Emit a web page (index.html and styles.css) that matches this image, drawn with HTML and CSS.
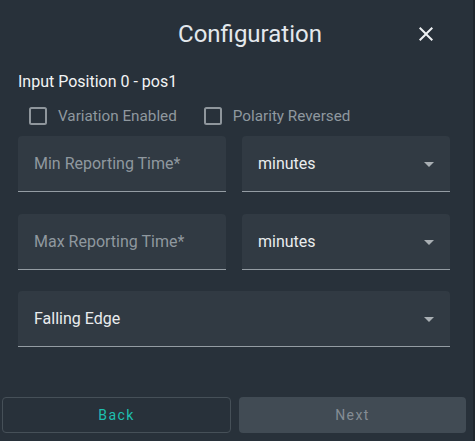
FILE: index.html
```html
<!DOCTYPE html>
<html lang="en">
<head>
    <meta charset="UTF-8">
    <meta name="viewport" content="width=device-width, initial-scale=1.0">
    <title>Configuration</title>
    <link rel="stylesheet" href="styles.css">
</head>
<body>

<div class="dialog">
    <div class="header">
        <div class="title">Configuration</div>
        <button class="close" aria-label="Close">
            <svg viewBox="0 0 24 24" width="24" height="24"><path d="M19,6.41L17.59,5L12,10.59L6.41,5L5,6.41L10.59,12L5,17.59L6.41,19L12,13.41L17.59,19L19,17.59L13.41,12L19,6.41Z"/></svg>
        </button>
    </div>

    <div class="content">
        <div class="subtitle">Input Position 0 - pos1</div>

        <div class="checks">
            <label class="check">
                <svg viewBox="0 0 24 24" width="24" height="24"><rect x="4" y="4" width="16" height="16" rx="1.5"/></svg>
                <span>Variation Enabled</span>
            </label>
            <label class="check">
                <svg viewBox="0 0 24 24" width="24" height="24"><rect x="4" y="4" width="16" height="16" rx="1.5"/></svg>
                <span>Polarity Reversed</span>
            </label>
        </div>

        <div class="row">
            <div class="field"><span class="placeholder">Min Reporting Time*</span></div>
            <div class="field select">
                <span class="value">minutes</span>
                <svg class="arrow" viewBox="0 0 24 24" width="24" height="24"><path d="M7,10L12,15L17,10H7Z"/></svg>
            </div>
        </div>

        <div class="row">
            <div class="field"><span class="placeholder">Max Reporting Time*</span></div>
            <div class="field select">
                <span class="value">minutes</span>
                <svg class="arrow" viewBox="0 0 24 24" width="24" height="24"><path d="M7,10L12,15L17,10H7Z"/></svg>
            </div>
        </div>

        <div class="row single">
            <div class="field select">
                <span class="value">Falling Edge</span>
                <svg class="arrow" viewBox="0 0 24 24" width="24" height="24"><path d="M7,10L12,15L17,10H7Z"/></svg>
            </div>
        </div>
    </div>

    <div class="actions">
        <button class="btn back">Back</button>
        <button class="btn next">Next</button>
    </div>
</div>

</body>
</html>
```

FILE: styles.css
```css
body {
    margin: 0;
    background-color: #28313a;
    font-family: Roboto, "Liberation Sans", sans-serif;
    height: 441px;
    overflow: hidden;
    border-right: 2px solid #1f262d;
    box-sizing: border-box;
}

.dialog {
    width: 468px;
}

.header {
    display: flex;
    align-items: center;
    height: 32px;
    padding: 18px 30px 0 86px;
}

.title {
    flex: 1;
    text-align: center;
    font-size: 24px;
    color: #e3e8ec;
}

.close {
    width: 24px;
    height: 24px;
    padding: 0;
    border: none;
    background: none;
    display: flex;
}

.close svg {
    fill: #eef1f3;
}

.content {
    padding: 0 18px 28px;
}

.subtitle {
    margin-top: 20px;
    font-size: 16px;
    line-height: 24px;
    color: #f2f4f5;
}

.checks {
    display: flex;
    gap: 24px;
    margin-top: 10px;
    padding-left: 8px;
}

.check {
    display: flex;
    align-items: center;
    gap: 8px;
    height: 24px;
    font-size: 15.25px;
    color: #8f989f;
}

.check svg rect {
    fill: none;
    stroke: #8f969c;
    stroke-width: 2;
}

.row {
    display: grid;
    grid-template-columns: 1fr 1fr;
    gap: 16px;
    margin-bottom: 22px;
}

.checks + .row {
    margin-top: 8px;
}

.row.single {
    grid-template-columns: 1fr;
    margin-top: -1px;
}

.field {
    height: 55px;
    display: flex;
    align-items: center;
    padding: 0 9px 0 16px;
    background-color: #313a43;
    border-radius: 4px 4px 0 0;
    border-bottom: 1px solid #949ca3;
    font-size: 16px;
}

.placeholder {
    color: #8f989f;
}

.value {
    flex: 1;
    color: #e9ecee;
}

.arrow {
    fill: #a9afb4;
}

.actions {
    display: flex;
    gap: 8px;
    padding: 0 2px;
}

.btn {
    flex: 1;
    height: 36px;
    border-radius: 4px;
    font-family: Roboto, "Liberation Sans", sans-serif;
    font-size: 14px;
    font-weight: 400;
    letter-spacing: 1.4px;
}

.back {
    background: none;
    border: 1px solid #465058;
    color: #1ebfb0;
}

.next {
    background-color: #414b54;
    border: none;
    color: #858d94;
}
```
